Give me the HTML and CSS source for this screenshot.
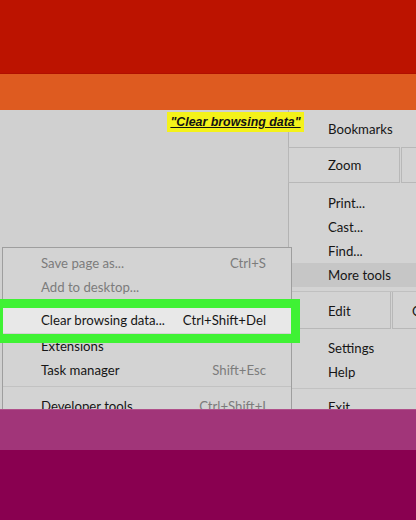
FILE: index.html
```html
<!DOCTYPE html>
<html>
<head>
<meta charset="utf-8">
<link rel="stylesheet" href="styles.css">
</head>
<body>
<div class="page">
  <div class="band band-red"></div>
  <div class="band band-orange"></div>
  <div class="stage">
    <div class="main-menu">
      <div class="item item-tall">Bookmarks</div>
      <div class="cells cells-zoom">
        <div class="cell cell-zoom">Zoom</div>
        <div class="cell cell-rest"></div>
      </div>
      <div class="group group-tools">
        <div class="item">Print...</div>
        <div class="item">Cast...</div>
        <div class="item">Find...</div>
        <div class="item item-hover">More tools</div>
      </div>
      <div class="cells cells-edit">
        <div class="cell cell-edit">Edit</div>
        <div class="cell cell-rest">Copy</div>
      </div>
      <div class="group group-settings">
        <div class="item">Settings</div>
        <div class="item">Help</div>
      </div>
      <div class="sep"></div>
      <div class="group group-exit">
        <div class="item">Exit</div>
      </div>
    </div>

    <div class="sub-menu">
      <div class="sub-group sub-top">
        <div class="sub-item disabled"><span>Save page as...</span><span class="key">Ctrl+S</span></div>
        <div class="sub-item disabled"><span>Add to desktop...</span></div>
      </div>
      <div class="sub-sep"></div>
      <div class="sub-item sub-active"><span>Clear browsing data...</span><span class="key key-dark">Ctrl+Shift+Del</span></div>
      <div class="sub-item"><span>Extensions</span></div>
      <div class="sub-item"><span>Task manager</span><span class="key">Shift+Esc</span></div>
      <div class="sub-sep sub-sep-low"></div>
      <div class="sub-item"><span>Developer tools</span><span class="key">Ctrl+Shift+I</span></div>
    </div>

    <div class="green-box"></div>
    <div class="callout">"Clear browsing data"</div>
  </div>
  <div class="band band-magenta"></div>
  <div class="band band-plum"></div>
</div>
</body>
</html>
```

FILE: styles.css
```css
* { box-sizing: border-box; }

html, body {
  margin: 0;
  padding: 0;
  background: #d1d1d1;
}

.page {
  width: 416px;
  height: 520px;
  display: flex;
  flex-direction: column;
  overflow: hidden;
  font-family: "Lato", "Noto Sans", sans-serif;
  font-size: 13.2px;
  color: #161616;
}

.band { flex: none; width: 100%; }
.band-red { height: 74px; background: #bc1300; border-bottom: 1px solid #b00f00; }
.band-orange { height: 36px; background: #de5b20; }
.band-magenta { height: 41px; background: #a13579; border-top: 1px solid #b0508a; }
.band-plum { height: 70px; background: #890050; }

.stage {
  flex: none;
  height: 299px;
  position: relative;
  overflow: hidden;
  display: grid;
  grid-template-columns: 288px 1fr;
  background: #d0d0d0;
}

/* main (right) menu */
.main-menu {
  grid-column: 2;
  background: #d3d3d3;
  border-left: 1px solid #b3b3b3;
  display: flex;
  flex-direction: column;
}

.item {
  height: 24px;
  display: flex;
  align-items: center;
  padding-left: 39px;
  white-space: nowrap;
}
.item-tall { height: 37px; }
.item-hover { background: #c6c6c6; }

.cells {
  display: flex;
  gap: 1px;
  margin-left: -1px;
}
.cells-zoom { height: 36px; }
.cells-edit { height: 38px; margin-top: 4px; border-top: 1px solid #c0c0c0; }
.cell {
  border: 1px solid #b8b8b8;
  border-top: none;
  display: flex;
  align-items: center;
  white-space: nowrap;
  overflow: hidden;
}
.cells-zoom .cell { border-top: 1px solid #b8b8b8; }
.cell-zoom { width: 112px; padding-left: 39px; }
.cell-edit { width: 103px; padding-left: 39px; padding-top: 1px; }
.cell-rest { flex: 1; padding-left: 18px; }
.cells-edit .cell-rest { padding-left: 19px; padding-top: 1px; }

.group-tools { padding-top: 8px; }
.group-settings { padding-top: 7px; }
.sep { height: 1px; background: #c2c2c2; margin: 4px 0 0; }
.group-exit { padding-top: 6px; }

/* sub menu (overlay) */
.sub-menu {
  position: absolute;
  left: 2px;
  top: 137px;
  width: 290px;
  height: 200px;
  background: #d3d3d3;
  border: 1px solid #9e9e9e;
  border-bottom: none;
  display: flex;
  flex-direction: column;
}
.sub-top { padding-top: 3px; }
.sub-item {
  height: 24px;
  flex: none;
  display: flex;
  align-items: center;
  justify-content: space-between;
  padding: 0 25px 0 38px;
  white-space: nowrap;
}
.sub-item.disabled { color: #7c7c7c; }
.key { color: #7c7c7c; }
.key-dark { color: #161616; }
.sub-sep {
  flex: none;
  height: 9px;
  border-bottom: 1px solid #c2c2c2;
  transform: translateY(-4px);
}
.sub-active {
  height: 26px;
  margin-top: -1px;
  margin-bottom: 1px;
  background: #e8e8e8;
}
.sub-sep-low { height: 5px; margin-bottom: 7px; transform: none; }

/* annotations */
.green-box {
  position: absolute;
  left: -6px;
  top: 189px;
  width: 306px;
  height: 44px;
  border: 9px solid #3ff234;
}
.callout {
  position: absolute;
  left: 167px;
  top: 2px;
  width: 137px;
  height: 20px;
  background: #f4f21a;
  font-family: "Liberation Sans", Arial, sans-serif;
  font-size: 12.4px;
  font-weight: bold;
  font-style: italic;
  color: #111;
  text-decoration: underline;
  text-align: center;
  line-height: 20px;
}
```
